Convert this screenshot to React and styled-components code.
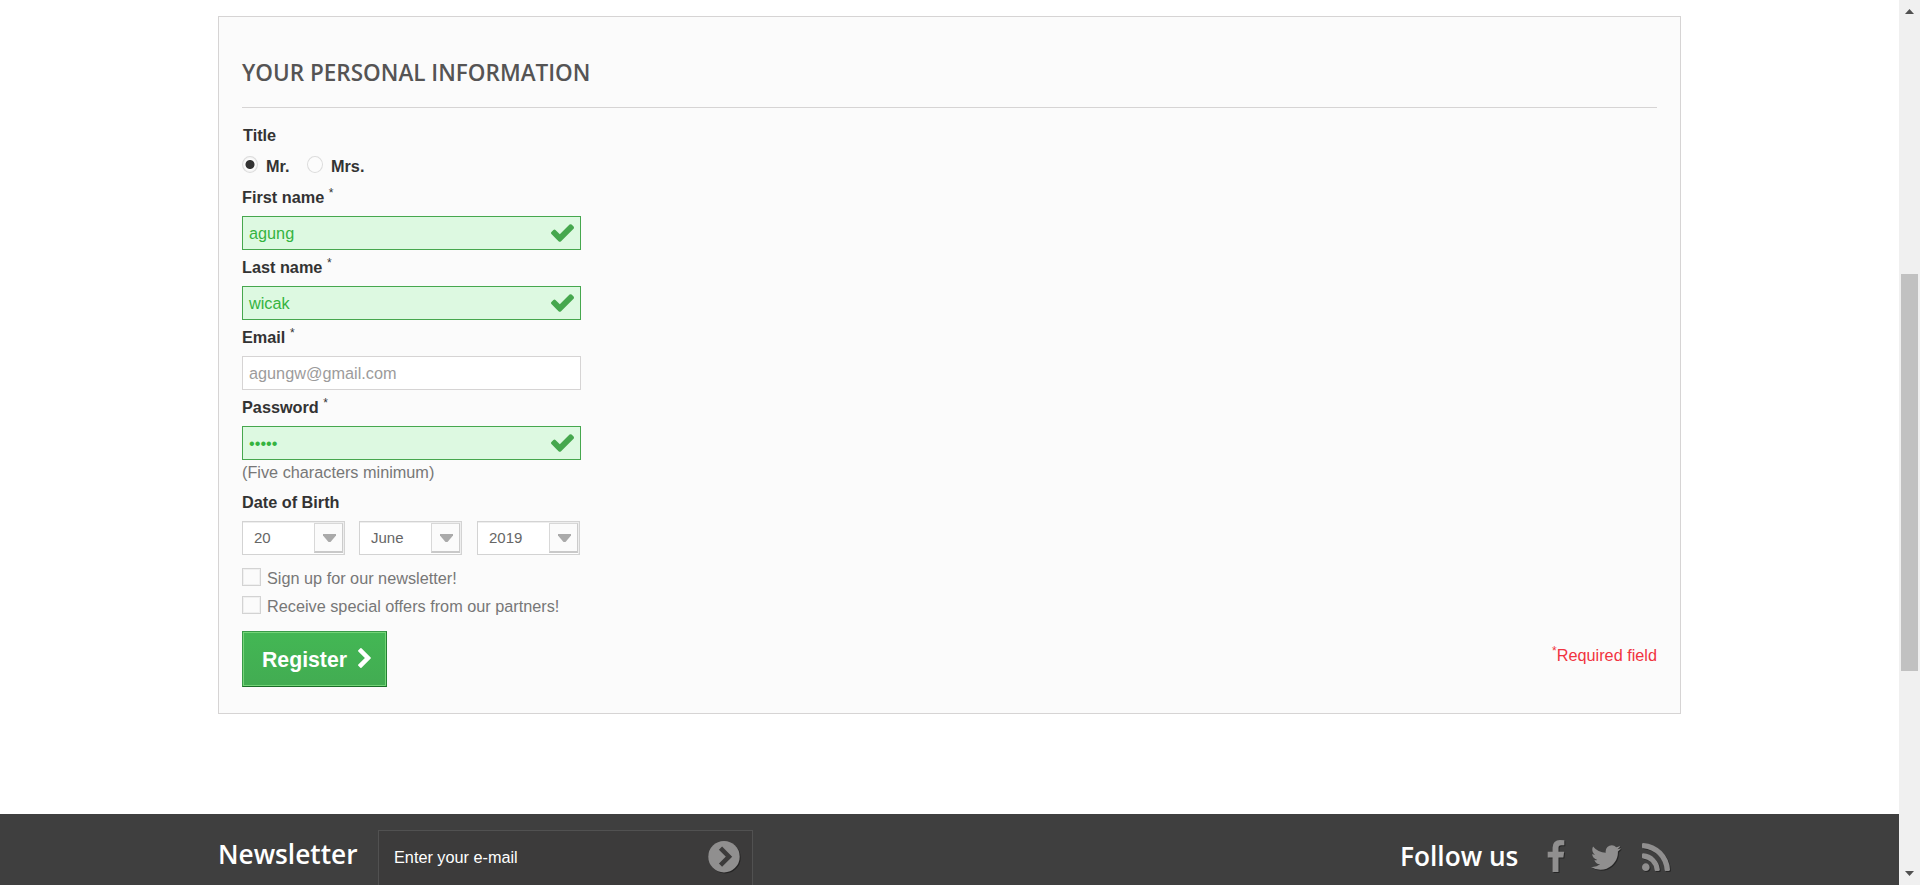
import React from 'react';
import styled, { createGlobalStyle, css } from 'styled-components';

const Global = createGlobalStyle`
  *, *::before, *::after { box-sizing: border-box; }
  body { margin: 0; background: #fff; color: #777; overflow: hidden;
    font: 16.25px/22px "Liberation Sans", Arial, sans-serif; }
`;

const Window = styled.div`display: flex; height: 885px; overflow: hidden;`;
const Page = styled.div`flex: 1; display: flex; flex-direction: column; padding-top: 16px; overflow: hidden;`;

const Panel = styled.section`
  width: 1463px; height: 698px; margin: 0 0 100px 218px; padding: 42px 23px 0;
  border: 1px solid #d6d4d4; background: #fbfbfb; flex: none;
`;
const Heading = styled.h3`
  margin: 0 0 16px; height: 49px; border-bottom: 1px solid #d6d4d4;
  font: 600 22.5px/28px "Open Sans", sans-serif; color: #555454; text-transform: uppercase;
`;
const Label = styled.label`
  display: block; height: 22px; color: #333; font-weight: 700;
  padding-left: ${p => p.$indent || 0}px;
`;
const Star = styled.sup`
  display: inline-block; height: 10px; line-height: 10px; font-size: 12px; font-weight: 400;
  vertical-align: 6px;
`;
const Radios = styled.div`display: flex; height: 40px; padding-top: 9px;`;
const RadioOption = styled.label`
  display: flex; color: #333; font-weight: 700; margin-right: 16px; width: ${p => p.$w}px;
`;
const RadioMark = styled.span`
  width: 16px; height: 17px; margin: 1px 8px 0 0; border: 1px solid #dcdcdc; border-radius: 50%;
  background: ${p => p.$on ? 'radial-gradient(circle, #333 4px, #fff 5px, #f3f3f3 7px)' : '#fcfcfc'};
`;
const Field = styled.div`height: 70px; ${p => p.$last && css`height: 64px;`}`;
const Input = styled.div`
  display: flex; align-items: center; justify-content: space-between;
  width: 339px; height: 34px; margin-top: 8px; padding: 0 6px 0 6px;
  border: 1px solid ${p => p.$ok ? '#46a74e' : '#d6d4d4'};
  background: ${p => p.$ok ? '#ddf9e1' : '#fff'};
  color: ${p => p.$ok ? '#35b33f' : '#9c9b9b'};
`;
const Hint = styled.div`height: 31px; padding-top: 1px;`;
const Selects = styled.div`display: flex; gap: 14px; margin: 8px 0 13px;`;
const Select = styled.div`
  display: flex; justify-content: space-between; width: 103px; height: 34px; padding: 1px 1px 1px 11px;
  margin-right: ${p => p.$gap || 0}px;
  border: 1px solid #d3d3d3; box-shadow: inset -1px 1px 0 #eee; background: #fff;
  color: #666; font-size: 15px; line-height: 30px;
`;
const Arrow = styled.span`
  width: 29px; height: 30px; display: flex; justify-content: center; padding: 10px 0 0 1px;
  border: 1px solid #d8d8d8; border-bottom: 2px solid #c9c9c9; border-right-color: #ccc; background: #fbfbfb;
`;
const CheckRow = styled.label`display: flex; height: 28px; line-height: 20px; gap: 6px;`;
const Box = styled.span`
  width: 19px; height: 18px; border: 1px solid #d3d3d3; background: #fbfbfb; box-shadow: inset 0 0 0 1px #f0f0f0;
`;
const Actions = styled.div`display: flex; justify-content: space-between; padding-top: 7px;`;
const Register = styled.button`
  display: flex; gap: 11px; width: 145px; height: 56px; padding: 16px 0 0 19px;
  border: 1px solid; border-color: #399a49 #247f32 #1a6d27 #399a49;
  box-shadow: inset 0 0 0 1px #74d578; background: linear-gradient(#43b754, #42ac52);
  color: #fff; font: 700 21.25px/24px "Liberation Sans", Arial, sans-serif;
`;
const Required = styled.div`color: #f13340; padding-top: 13px;`;

const Footer = styled.footer`
  flex: 1; display: flex; align-items: flex-start; padding: 16px 218px 0 218px;
  background: #3f3f3f; border-bottom: 1px solid #3a3838;
`;
const FootTitle = styled.h4`
  margin: 0; padding: ${p => p.$top}px 0 0; width: ${p => p.$w}px; flex: none; white-space: nowrap;
  font: 600 26.25px/32px "Open Sans", sans-serif; color: #fff;
`;
const MailBox = styled.div`
  display: flex; justify-content: space-between; width: 375px; height: 55px; padding: 10px 12px 0 15px;
  border: 1px solid #515151; border-bottom: 0; background: #3c3b3b; color: #fff; line-height: 32px;
`;
const Social = styled.div`display: flex; margin-left: auto;`;
const Icon = styled.svg`
  display: block; flex: none; fill: ${p => p.$fill};
  margin: ${p => p.$m || 0};
  ${p => p.$shadow && css`filter: drop-shadow(1px 1px 0 rgba(0,0,0,.4));`}
`;

const Track = styled.div`
  width: 21px; height: 885px; background: #f0f0f0; display: flex; flex-direction: column;
  align-items: center; padding: 9px 0;
`;
const Thumb = styled.div`width: 17px; height: 397px; background: #c1c1c1; margin: 260px 0 auto;`;

const Check = () => (
  <Icon $fill="#46a74e" width="23" height="18" viewBox="121 334 1550 1188">
    <path d="M1671 566q0 40-28 68l-724 724-136 136q-28 28-68 28t-68-28l-136-136-362-362q-28-28-28-68t28-68l136-136q28-28 68-28t68 28l294 295 656-657q28-28 68-28t68 28l136 136q28 28 28 68z" />
  </Icon>
);

const TextField = ({ label, value, ok, last }) => (
  <Field $last={last}>
    <Label>{label} <Star>*</Star></Label>
    <Input $ok={ok}><span>{value}</span>{ok && <Check />}</Input>
  </Field>
);

const DateSelect = ({ value, gap }) => (
  <Select $gap={gap}>{value}
    <Arrow><Icon $fill="#aaa" width="13" height="8" viewBox="0 0 13 8"><path d="M0 0h13v1.500L7.500 8h-2L0 1.500z" /></Icon></Arrow>
  </Select>
);

export default function App() {
  return (
    <Window>
      <Global />
      <Page>
        <Panel>
          <Heading>Your personal information</Heading>
          <Label $indent={1}>Title</Label>
          <Radios>
            <RadioOption $w={49}><RadioMark $on />Mr.</RadioOption>
            <RadioOption $w={60}><RadioMark />Mrs.</RadioOption>
          </Radios>
          <TextField label="First name" value="agung" ok />
          <TextField label="Last name" value="wicak" ok />
          <TextField label="Email" value="agungw@gmail.com" />
          <TextField label="Password" value="•••••" ok last />
          <Hint>(Five characters minimum)</Hint>
          <Label>Date of Birth</Label>
          <Selects>
            <DateSelect value="20" />
            <DateSelect value="June" gap={1} />
            <DateSelect value="2019" />
          </Selects>
          <CheckRow><Box />Sign up for our newsletter!</CheckRow>
          <CheckRow><Box />Receive special offers from our partners!</CheckRow>
          <Actions>
            <Register type="button">Register
              <Icon $fill="#fff" width="13" height="20" viewBox="346 26 1036 1612">
                <path d="M1363 877l-742 742q-19 19-45 19t-45-19l-166-166q-19-19-19-45t19-45l531-531-531-531q-19-19-19-45t19-45l166-166q19-19 45-19t45 19l742 742q19 19 19 45t-19 45z" />
              </Icon>
            </Register>
            <Required><Star>*</Star>Required field</Required>
          </Actions>
        </Panel>
        <Footer>
          <FootTitle $w={160} $top={8}>Newsletter</FootTitle>
          <MailBox>Enter your e-mail
            <Icon $fill="#908f8f" $shadow width="32" height="32" viewBox="0 0 32 32">
              <circle cx="16" cy="15.700" r="15.700" />
              <path d="M12.500 7.200L21 15.700l-8.500 8.500" fill="none" stroke="#3c3b3b" strokeWidth="4.500" />
            </Icon>
          </MailBox>
          <Social>
            <FootTitle $w={147} $top={10}>Follow us</FootTitle>
            <Icon $fill="#908f8f" $shadow width="18" height="32" viewBox="479 0 864 1664" $m="10px 26px 0 0">
              <path d="M1343 12v264h-157q-86 0-116 36t-30 108v189h293l-39 296h-254v759h-306v-759h-255v-296h255v-218q0-186 104-288.500t277-102.500q147 0 228 12z" />
            </Icon>
            <Icon $fill="#908f8f" $shadow width="30" height="25" viewBox="108 256 1576 1280" $m="15px 21px 0 0">
              <path d="M1684 408q-67 98-162 167 1 14 1 42 0 130-38 259.500t-115.500 248.500-184.500 210.500-258 146-323 54.500q-271 0-496-145 35 4 78 4 225 0 401-138-105-2-188-64.500t-114-159.500q33 5 61 5 43 0 85-11-112-23-185.500-111.500t-73.500-205.500v-4q68 38 146 41-66-44-105-115t-39-154q0-88 44-163 121 149 294.500 238.500t371.500 99.500q-8-38-8-74 0-134 94.500-228.500t228.500-94.500q140 0 236 102 109-21 205-78-37 115-142 178 93-10 186-50z" />
            </Icon>
            <Icon $fill="#908f8f" $shadow width="28" height="28" viewBox="192 128 1408 1408" $m="13px 11px 0 0">
              <path d="M576 1344q0 80-56 136t-136 56-136-56-56-136 56-136 136-56 136 56 56 136zm512 123q2 28-17 48-18 21-47 21h-135q-25 0-43-16.500t-20-41.500q-22-229-184.500-391.500t-391.500-184.500q-25-2-41.500-20t-16.500-43v-135q0-29 21-47 17-17 43-17h5q160 13 306 80.500t259 181.500q114 113 181.500 259t80.500 306zm512 2q2 27-18 47-18 20-46 20h-143q-26 0-44.500-17.500t-19.500-42.500q-12-215-101-408.500t-231.500-336-336-231.500-408.500-102q-25-1-42.500-19.500t-17.500-43.500v-143q0-28 20-46 18-18 44-18h3q262 13 501.500 120t425.500 294q187 186 294 425.500t120 501.500z" />
            </Icon>
          </Social>
        </Footer>
      </Page>
      <Track>
        <Icon $fill="#505050" width="9" height="5" viewBox="0 0 9 5"><path d="M4.500 0L9 5H0z" /></Icon>
        <Thumb />
        <Icon $fill="#505050" width="9" height="5" viewBox="0 0 9 5"><path d="M0 0h9L4.500 5z" /></Icon>
      </Track>
    </Window>
  );
}
